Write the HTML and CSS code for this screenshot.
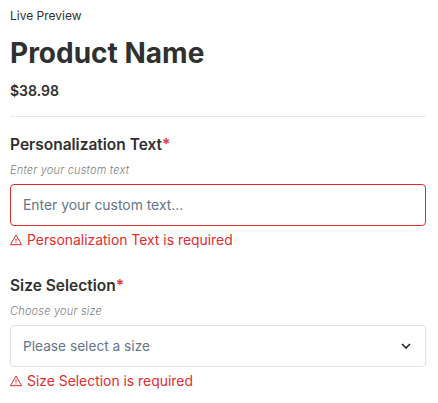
FILE: index.html
```html
<!DOCTYPE html>
<html>

<head>
    <meta charset="utf-8">
    <title>Live Preview</title>
    <link rel="stylesheet" href="styles.css">
</head>

<body>
    <div class="preview">
        <div class="preview-label">Live Preview</div>
        <h1 class="product-name">Product Name</h1>
        <div class="product-price">$38.98</div>
        <hr class="divider">

        <div class="field">
            <div class="field-label">Personalization Text<span class="required">*</span></div>
            <div class="field-help">Enter your custom text</div>
            <input class="control control-error" type="text" placeholder="Enter your custom text...">
            <div class="field-error">
                <svg class="error-icon" viewBox="0 0 12 12" width="12" height="12">
                    <path d="M6 1 11.6 10.7H.4Z" />
                    <path d="M6 4.4V7.4M6 8.3V9.3" />
                </svg>
                <span>Personalization Text is required</span>
            </div>
        </div>

        <div class="field">
            <div class="field-label">Size Selection<span class="required">*</span></div>
            <div class="field-help">Choose your size</div>
            <div class="control control-select">
                <span>Please select a size</span>
                <svg class="chevron" viewBox="0 0 10 6" width="10" height="6">
                    <path d="M1 1 5 5 9 1" />
                </svg>
            </div>
            <div class="field-error">
                <svg class="error-icon" viewBox="0 0 12 12" width="12" height="12">
                    <path d="M6 1 11.6 10.7H.4Z" />
                    <path d="M6 4.4V7.4M6 8.3V9.3" />
                </svg>
                <span>Size Selection is required</span>
            </div>
        </div>
    </div>
</body>

</html>
```

FILE: styles.css
```css
body {
    font-family: Inter, "Liberation Sans", sans-serif;
    background: #fff;
    color: #303030;
    margin: 0;
    padding: 0;
}

.preview {
    padding: 9px 12px 0 10px;
}

.preview-label {
    font-size: 12px;
    line-height: 14px;
}

.product-name {
    font-size: 28px;
    font-weight: 700;
    line-height: 34px;
    margin: 13px 0 0;
}

.product-price {
    font-size: 14px;
    font-weight: 600;
    line-height: 18px;
    margin-top: 12px;
}

.divider {
    border: none;
    border-top: 1px solid #e8e8e8;
    margin: 16px 0 0;
}

.field {
    margin-top: 18px;
}

.field + .field {
    margin-top: 27px;
}

.field-label {
    font-size: 15.5px;
    font-weight: 600;
    line-height: 20px;
}

.required {
    color: #e53535;
}

.field-help {
    color: #808080;
    font-size: 11px;
    font-style: italic;
    font-weight: 300;
    letter-spacing: 0.2px;
    line-height: 14px;
    margin-top: 8px;
}

.control {
    display: block;
    box-sizing: border-box;
    width: 100%;
    height: 42px;
    margin-top: 7px;
    padding: 0 12px;
    background: #fff;
    border: 1px solid #e1e1e1;
    border-radius: 4px;
    color: #64748b;
    font-family: inherit;
    font-size: 13.9px;
}

.control::placeholder {
    color: #64748b;
    opacity: 1;
}

.control-error {
    border-color: #df2c2c;
}

.control-select {
    display: flex;
    justify-content: space-between;
    align-items: center;
    padding-right: 14px;
    font-size: 13.7px;
}

.chevron {
    fill: none;
    stroke: #222;
    stroke-width: 1.6;
}

.field-error {
    display: flex;
    align-items: center;
    gap: 5px;
    color: #e02d2d;
    font-size: 13.9px;
    line-height: 18px;
    margin-top: 5px;
}

.error-icon {
    fill: none;
    stroke: #e02d2d;
    stroke-width: 1;
    flex: none;
}
```
